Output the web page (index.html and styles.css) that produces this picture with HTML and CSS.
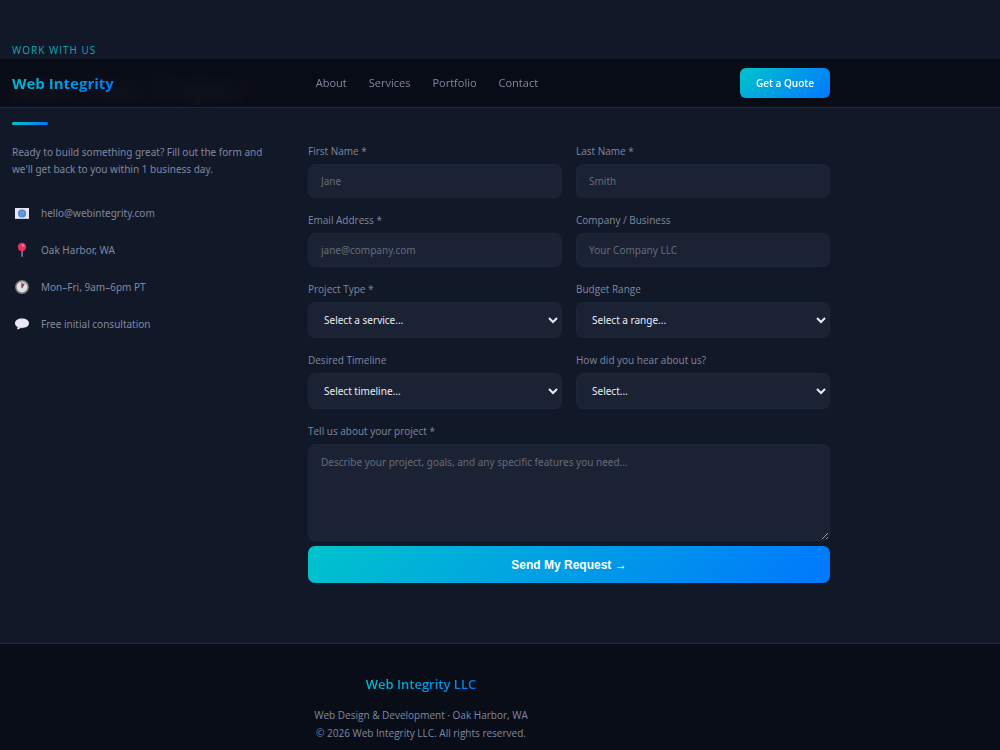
FILE: index.html
```html
<!DOCTYPE html>
<html lang="en">
<head>
<meta charset="utf-8">
<meta name="viewport" content="width=device-width, initial-scale=1">
<title>Web Integrity</title>
<link rel="stylesheet" href="styles.css">
</head>
<body>
<header class="site-header">
  <nav class="container nav">
    <a class="logo" href="#">Web Integrity</a>
    <div class="nav-links">
      <a href="#about">About</a>
      <a href="#services">Services</a>
      <a href="#portfolio">Portfolio</a>
      <a href="#contact">Contact</a>
    </div>
    <a class="nav-cta" href="#contact">Get a Quote</a>
  </nav>
</header>
<main class="contact" id="contact">
  <div class="container">
    <p class="eyebrow">WORK WITH US</p>
    <h2 class="title">Start Your Project</h2>
    <div class="accent"></div>
    <div class="columns">
      <div class="info">
        <p class="intro">Ready to build something great? Fill out the form and we'll get back to you within 1 business day.</p>
        <ul class="details">
          <li>
            <svg class="icon" viewBox="0 0 20 20" aria-hidden="true"><path fill="#e9e4f5" d="M3 5h14v11H3z"/><path fill="#cfc8e2" d="M3 15h14v1H3z"/><circle cx="10" cy="10.5" r="4" fill="#3f7fd2"/><circle cx="10" cy="10.5" r="1.5" fill="none" stroke="#7fb0ec"/><path d="M11.5 9v2q1 1 1.300-.5A2.800 2.800 0 1 0 11.500 13" fill="none" stroke="#7fb0ec" stroke-width=".6"/></svg>
            <a href="mailto:hello@webintegrity.com">hello@webintegrity.com</a>
          </li>
          <li>
            <svg class="icon" viewBox="0 0 20 20" aria-hidden="true"><path fill="#8f8b9c" d="M9.400 10h1.400v6.500l-.7.800-.7-.8z"/><circle cx="10" cy="7" r="4.200" fill="#e8315f"/><circle cx="11" cy="5.500" r="1.300" fill="#ff86a2"/></svg>
            <span>Oak Harbor, WA</span>
          </li>
          <li>
            <svg class="icon" viewBox="0 0 20 20" aria-hidden="true"><circle cx="10" cy="10" r="6.200" fill="#e2dfe2" stroke="#7d797c" stroke-width="1.500"/><path d="M10 10.500V6M10 10.500l2-3.500" stroke="#4a4450" stroke-width="1.200" stroke-linecap="round"/><path d="M10.500 10 9 6.500" stroke="#d94a62" stroke-width=".8"/></svg>
            <span>Mon–Fri, 9am–6pm PT</span>
          </li>
          <li>
            <svg class="icon" viewBox="0 0 20 20" aria-hidden="true"><path fill="#ece7f6" d="M10 4.500c4 0 7 2 7 4.800s-3 4.700-7 4.700l-1.500-.1Q7 15.500 4.800 15.200q1-1 .7-2.200C4 12.200 3 10.900 3 9.300c0-2.800 3-4.800 7-4.800z"/><path d="M5 12.500q2.500 1.500 6 1.200" fill="none" stroke="#c8bddd" stroke-width=".8"/></svg>
            <span>Free initial consultation</span>
          </li>
        </ul>
      </div>
      <form class="form">
        <div class="field"><label for="first">First Name *</label><input id="first" type="text" placeholder="Jane"></div>
        <div class="field"><label for="last">Last Name *</label><input id="last" type="text" placeholder="Smith"></div>
        <div class="field"><label for="email">Email Address *</label><input id="email" type="email" placeholder="jane@company.com"></div>
        <div class="field"><label for="company">Company / Business</label><input id="company" type="text" placeholder="Your Company LLC"></div>
        <div class="field"><label for="type">Project Type *</label><select id="type"><option>Select a service...</option></select></div>
        <div class="field"><label for="budget">Budget Range</label><select id="budget"><option>Select a range...</option></select></div>
        <div class="field"><label for="timeline">Desired Timeline</label><select id="timeline"><option>Select timeline...</option></select></div>
        <div class="field"><label for="source">How did you hear about us?</label><select id="source"><option>Select...</option></select></div>
        <div class="field wide"><label for="message">Tell us about your project *</label><textarea id="message" placeholder="Describe your project, goals, and any specific features you need..."></textarea>
          <button class="submit" type="button">Send My Request →</button></div>
      </form>
    </div>
  </div>
</main>
<footer class="site-footer">
  <div class="container footer-inner">
    <a class="logo footer-logo" href="#">Web Integrity LLC</a>
    <p>Web Design &amp; Development · Oak Harbor, WA</p>
    <p>© 2026 Web Integrity LLC. All rights reserved.</p>
  </div>
</footer>
</body>
</html>
```
FILE: styles.css
```css
:root {
  --bg: #111827;
  --dark: #080d18;
  --field: #1a2234;
  --line: #1c273c;
  --muted: #8089a0;
  --gradient: linear-gradient(135deg, #00c4cc, #0077ff);
}
* { box-sizing: border-box; }
body {
  margin: 0;
  background: var(--dark);
  color: var(--muted);
  font: 10px/18px "Open Sans", "Noto Sans", sans-serif;
}
p, h2, ul { margin: 0; padding: 0; }
a { color: inherit; text-decoration: none; }
.container { max-width: 842px; padding: 0 12px; }

/* The bar floats over the section heading and blurs it. */
.site-header {
  position: absolute;
  top: 59px;
  left: 0;
  right: 0;
  z-index: 1;
  background: rgba(8, 12, 22, 0.95);
  border-bottom: 1px solid #1e293b;
  backdrop-filter: blur(8px);
}
.nav {
  display: flex;
  align-items: center;
  justify-content: space-between;
  height: 48px;
}
.logo {
  background: var(--gradient);
  background-clip: text;
  color: transparent;
  font-size: 15px;
  font-weight: 700;
  line-height: 20px;
}
.nav-links { display: flex; gap: 22px; font-size: 11px; }
.nav-cta {
  padding: 6px 16px;
  border-radius: 6px;
  background: var(--gradient);
  color: #fff;
  font-weight: 600;
}

.contact {
  padding: 41px 0 60px;
  background: var(--bg);
  border-bottom: 1px solid #1a2740;
}
.eyebrow { color: #14a9b2; letter-spacing: 1px; }
.title {
  margin-top: 12px;
  color: #e8edf5;
  font-size: 26px;
  line-height: 36px;
}
.accent {
  width: 36px;
  height: 3px;
  margin-top: 15px;
  border-radius: 2px;
  background: linear-gradient(90deg, #00c4cc, #0077ff);
}
.columns {
  display: grid;
  grid-template-columns: 1fr 2fr;
  gap: 35px;
  margin-top: 19px;
}
.info { font-family: "Noto Sans", "Open Sans", sans-serif; }
.intro { line-height: 17px; }
.details {
  display: grid;
  gap: 17px;
  margin-top: 25px;
  list-style: none;
}
.details li {
  display: flex;
  align-items: center;
  gap: 9px;
  height: 20px;
}
.icon { width: 20px; height: 20px; }

.form {
  display: grid;
  grid-template-columns: 1fr 1fr;
  gap: 15px 14px;
}
.field { display: flex; flex-direction: column; }
.wide { grid-column: 1 / -1; }
.field label { margin-bottom: 6px; line-height: 14px; }
.field input, .field select, .field textarea {
  width: 100%;
  height: 34px;
  padding: 0 12px;
  border: 1px solid var(--line);
  border-radius: 7px;
  background: var(--field);
  color: #e8edf5;
  font: 10px/16px "Noto Sans", "Open Sans", sans-serif;
}
.field select { height: 36px; padding: 0 11px; }
.field textarea { height: 97px; padding: 9px 12px; resize: vertical; }
.field ::placeholder { color: #676c78; }
.submit {
  height: 37px;
  margin-top: 5px;
  border: 0;
  border-radius: 7px;
  background: var(--gradient);
  color: #fff;
  font: 700 12px/16px "Liberation Sans", Arial, sans-serif;
}

.site-footer { padding: 30px 0 8px; }
.footer-inner { text-align: center; }
.footer-logo { display: block; width: max-content; margin: 0 auto 12px; font-size: 13px; font-weight: 600; }
```
